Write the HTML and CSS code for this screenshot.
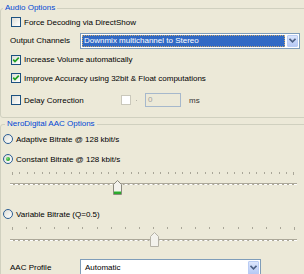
FILE: index.html
```html
<!DOCTYPE html>
<html>
<head>
<meta charset="utf-8">
<link rel="stylesheet" href="styles.css">
</head>
<body>
<fieldset class="group g1">
  <legend class="lg1">Audio Options</legend>
  <div class="row r1">
    <span class="cb"></span><span class="lbl">Force Decoding via DirectShow</span>
  </div>
  <div class="row r2">
    <span class="flabel">Output Channels</span>
    <div class="combo c1">
      <div class="combo-val"><span class="sel">Downmix multichannel to Stereo</span></div>
      <div class="combo-btn"><svg width="7" height="5" viewBox="0 0 7 5"><path d="M0.5 0.8 L3.5 3.8 L6.5 0.8" fill="none" stroke="#4D6185" stroke-width="1.6"/></svg></div>
    </div>
  </div>
  <div class="row r3">
    <span class="cb"><svg width="8" height="8" viewBox="0 0 8 8"><path d="M1.2 3.6 L3 5.6 L6.8 1.6" fill="none" stroke="#21A121" stroke-width="1.7"/></svg></span><span class="lbl">Increase Volume automatically</span>
  </div>
  <div class="row r4">
    <span class="cb"><svg width="8" height="8" viewBox="0 0 8 8"><path d="M1.2 3.6 L3 5.6 L6.8 1.6" fill="none" stroke="#21A121" stroke-width="1.7"/></svg></span><span class="lbl">Improve Accuracy using 32bit &amp; Float computations</span>
  </div>
  <div class="row r5">
    <span class="cb"></span><span class="lbl dlbl">Delay Correction</span>
    <span class="cb-dis"></span><span class="dot"></span>
    <div class="tbox">0</div>
    <span class="ms">ms</span>
  </div>
</fieldset>

<fieldset class="group g2">
  <legend class="lg2">NeroDigital AAC Options</legend>
  <div class="row rr"><span class="rb"></span><span class="rlbl">Adaptive Bitrate @ 128 kbit/s</span></div>
  <div class="row rr"><span class="rb on"><span class="rdot"></span></span><span class="rlbl">Constant Bitrate @ 128 kbit/s</span></div>
  <div class="slider s1">
    <div class="ticks t1"></div>
    <div class="track"></div>
    <svg class="thumb th1" width="9" height="15" viewBox="0 0 9 15">
      <path d="M0.5 4.5 L4.5 0.5 L8.5 4.5 L8.5 14.5 L0.5 14.5 Z" fill="#F3F2EC" stroke="#8C8A7E"/>
      <rect x="1" y="11.5" width="7" height="2.5" fill="#2CAA2C"/>
      <rect x="1" y="11" width="7" height="1" fill="#8FD68F"/>
    </svg>
  </div>
  <div class="row rr r3b"><span class="rb"></span><span class="rlbl">Variable Bitrate (Q=0.5)</span></div>
  <div class="slider s2">
    <div class="ticks t2"></div>
    <div class="track"></div>
    <svg class="thumb th2" width="9" height="15" viewBox="0 0 9 15">
      <path d="M0.5 4.5 L4.5 0.5 L8.5 4.5 L8.5 14.5 L0.5 14.5 Z" fill="#F3F2EC" stroke="#B5B2A6"/>
    </svg>
  </div>
  <div class="row rp">
    <span class="flabel">AAC Profile</span>
    <div class="combo c2">
      <div class="combo-val"><span class="plain">Automatic</span></div>
      <div class="combo-btn"><svg width="7" height="5" viewBox="0 0 7 5"><path d="M0.5 0.8 L3.5 3.8 L6.5 0.8" fill="none" stroke="#4D6185" stroke-width="1.6"/></svg></div>
    </div>
  </div>
</fieldset>
<script>
  function ticks(sel, n) {
    var el = document.querySelector(sel);
    for (var i = 0; i < n; i++) {
      var t = document.createElement('span');
      t.className = 'tick' + (i === 0 || i === n - 1 ? ' end' : '');
      el.appendChild(t);
    }
  }
  ticks('.t1', 39);
  ticks('.t2', 21);
</script>
</body>
</html>
```
FILE: styles.css
```css
html, body {
  margin: 0;
  padding: 0;
}
body {
  width: 304px;
  height: 274px;
  overflow: hidden;
  background: #ECE9D8;
  font-family: "Liberation Sans", Arial, sans-serif;
  font-size: 8px;
  color: #000;
}
.group {
  margin: 0 -8px 0 0;
  padding: 0;
  border: 1px solid #D0D0BF;
  border-radius: 3px;
  min-width: 0;
}
.g1 {
  margin-top: 3px;
  padding-bottom: 4px;
}
.g2 {
  margin-top: 1px;
  height: 160px;
}
legend {
  color: #0046D5;
  line-height: 10px;
  height: 10px;
  padding: 0 2px;
}
.lg1 { margin-left: 2px; }
.lg2 { margin-left: 4px; }

.row {
  display: flex;
  align-items: center;
  white-space: nowrap;
}
.r1 { height: 18px; }
.r2 { height: 19px; }
.r3 { height: 19px; }
.r4 { height: 18px; }
.r5 { height: 26px; }

.cb {
  box-sizing: border-box;
  width: 10px;
  height: 10px;
  margin-left: 10px;
  border: 1px solid #1C5180;
  background: linear-gradient(135deg, #DCDCD7 0%, #F3F3EF 60%, #FFFFFF 100%);
  display: flex;
  align-items: center;
  justify-content: center;
}
.lbl { margin-left: 3px; }
.dlbl { width: 97px; }

.flabel {
  margin-left: 9px;
  width: 70px;
}

.combo {
  box-sizing: border-box;
  display: flex;
  border: 1px solid #7F9DB9;
  background: #fff;
}
.c1 {
  width: 220px;
  height: 16px;
}
.c2 {
  width: 181px;
  height: 18px;
  margin-top: 1px;
}
.combo-val {
  flex: 1;
  display: flex;
  padding: 1px;
}
.sel {
  flex: 1;
  box-sizing: border-box;
  background: #316AC5;
  color: #fff;
  border: 1px dotted #C8A870;
  padding-left: 1px;
  line-height: 10px;
}
.plain {
  padding-left: 3px;
  align-self: center;
}
.combo-btn {
  box-sizing: border-box;
  width: 11px;
  margin: 1px;
  border: 1px solid #B9CCF4;
  border-radius: 1px;
  background: linear-gradient(180deg, #DCE6FC 0%, #C4D4F8 60%, #B6C9F4 100%);
  display: flex;
  align-items: center;
  justify-content: center;
}

.cb-dis {
  box-sizing: border-box;
  width: 10px;
  height: 10px;
  border: 1px solid #CAC8BB;
  background: #fff;
}
.dot {
  width: 1px;
  height: 1px;
  margin-left: 5px;
  background: #B8B6AA;
}
.tbox {
  box-sizing: border-box;
  width: 36px;
  height: 14px;
  margin-left: 8px;
  border: 1px solid #A6B8CC;
  color: #A0A0A0;
  padding-left: 2px;
  line-height: 12px;
}
.ms {
  margin-left: 8px;
  color: #333;
}

.rr { height: 20px; }
.r3b { height: 24px; }
.rb {
  box-sizing: border-box;
  width: 10px;
  height: 10px;
  margin-left: 2px;
  border: 1px solid #2C5E94;
  border-radius: 50%;
  background: linear-gradient(135deg, #DCDCD7 0%, #F3F3EF 60%, #FFFFFF 100%);
  display: flex;
  align-items: center;
  justify-content: center;
}
.rdot {
  width: 4px;
  height: 4px;
  border-radius: 50%;
  background: radial-gradient(circle at 35% 35%, #7BE07B 0%, #21A121 70%, #1A8A1A 100%);
}
.rlbl { margin-left: 3px; }

.slider {
  position: relative;
  margin-left: 9px;
  width: 287px;
}
.s1 { height: 30px; }
.s2 { height: 25px; }
.ticks {
  display: flex;
  justify-content: space-between;
  align-items: flex-start;
  margin: 0 2px;
}
.t1 { margin-top: 3px; }
.t2 { margin-top: 1px; }
.tick {
  width: 1px;
  height: 2px;
  background: #A9A698;
}
.tick.end { height: 3px; }
.track {
  height: 1px;
  background: #ACA899;
  border-bottom: 1px dashed #FFFFFF;
}
.t1 + .track { margin-top: 8px; }
.t2 + .track { margin-top: 9px; }
.thumb {
  position: absolute;
  display: block;
}
.th1 { left: 103px; top: 8px; }
.th2 { left: 140px; top: 5px; }

.rp { height: 30px; }
```
